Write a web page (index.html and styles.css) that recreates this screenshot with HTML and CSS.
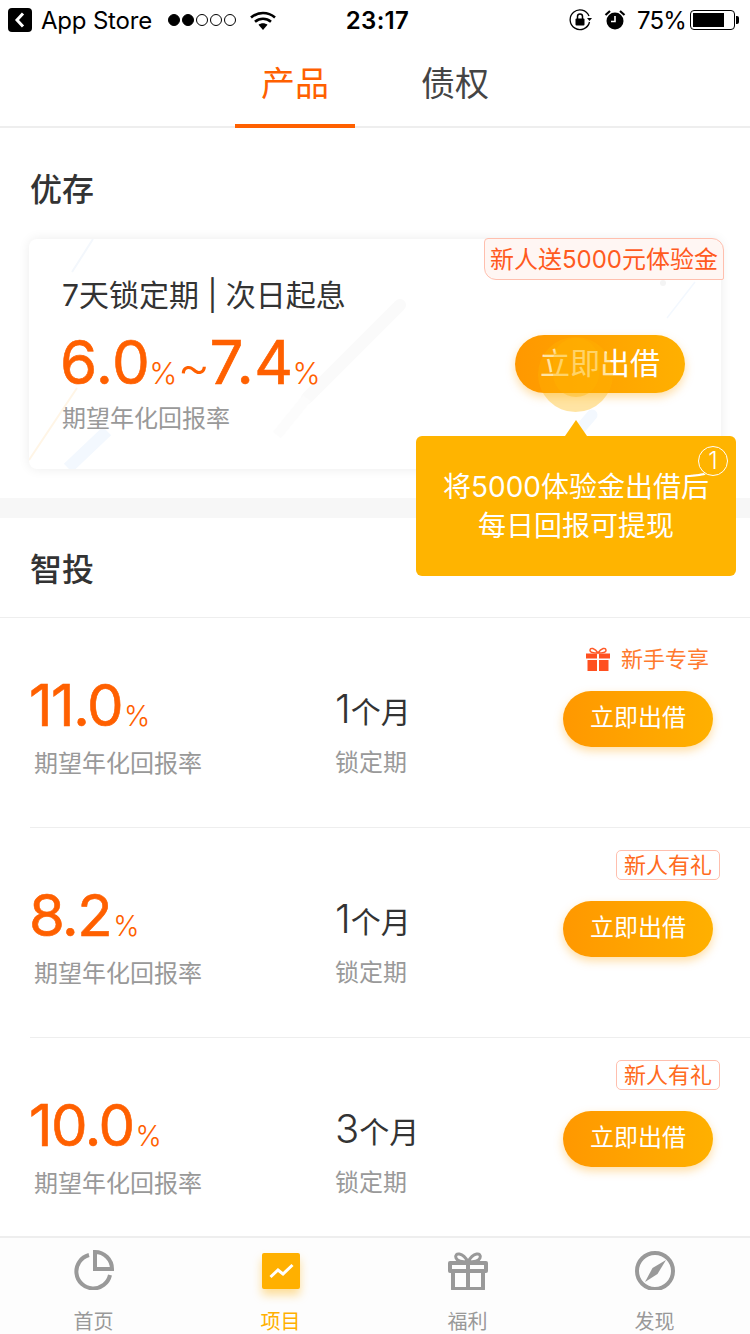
FILE: index.html
```html
<!DOCTYPE html>
<html lang="zh-CN">
<head>
    <meta charset="UTF-8">
    <meta name="viewport" content="width=device-width, initial-scale=1.0">
    <title>项目</title>
    <link rel="stylesheet" href="styles.css">
</head>
<body>
<div class="page">
    <div class="status-bar">
        <div class="status-left">
            <svg class="back-icon" width="24" height="24" viewBox="0 0 24 24"><rect width="24" height="24" rx="4" fill="#000"/><path d="M15 5.500L9 12l6 6.500" fill="none" stroke="#fff" stroke-width="3"/></svg>
            <span class="status-app">App Store</span>
            <span class="signal"><i class="on"></i><i class="on"></i><i></i><i></i><i></i></span>
            <svg class="wifi-icon" width="26" height="19" viewBox="0 0 26 19"><path d="M1 6.500C8 .5 18 .5 25 6.500" fill="none" stroke="#000" stroke-width="2.600"/><path d="M5 10.700c4.800-4 11.200-4 16 0" fill="none" stroke="#000" stroke-width="2.600"/><path d="M8.500 13.800c2.700-2 6.300-2 9 0L13 19z" fill="#000"/></svg>
        </div>
        <div class="status-time">23:17</div>
        <div class="status-right">
            <svg width="24" height="22" viewBox="0 0 24 22"><path d="M20.500 13A9.800 9.800 0 1 1 20 7" fill="none" stroke="#000" stroke-width="1.300"/><path d="M18 9h5l-2.500 3z" fill="#000"/><rect x="6.500" y="9.500" width="9" height="7" rx="1" fill="#000"/><path d="M8.500 10V7.500a2.500 2.500 0 0 1 5 0V10" fill="none" stroke="#000" stroke-width="1.500"/></svg>
            <svg class="alarm-icon" width="22" height="22" viewBox="0 0 22 22"><circle cx="11" cy="12" r="8.500" fill="#000"/><path d="M11 7v5.500H7" fill="none" stroke="#fff" stroke-width="1.600"/><path d="M1.500 6L6 2M20.500 6L16 2" stroke="#000" stroke-width="2.200"/></svg>
            <span class="status-battery-text">75%</span>
            <span class="battery"><i></i></span>
        </div>
    </div>

    <div class="tabs">
        <a class="tab active">产品</a>
        <a class="tab">债权</a>
    </div>

    <main class="content">
        <section class="saving">
            <h2 class="section-title">优存</h2>
            <div class="card">
                <svg class="card-bg" width="692" height="230" viewBox="0 0 692 230" fill="none">
                    <path d="M64 0L43 33" stroke="#f3f7fc" stroke-width="2"/>
                    <path d="M0 221L48 149" stroke="#fff5e6" stroke-width="2"/>
                    <path d="M39 229L78 192" stroke="#f3f8fe" stroke-width="12"/>
                    <path d="M371 66L278 159" stroke="#fafafa" stroke-width="12" stroke-linecap="round"/>
                    <path d="M278 159L248 196" stroke="#fcfcfc" stroke-width="10"/>
                    <path d="M666 43L638 79" stroke="#f3f8fe" stroke-width="1.500"/>
                    <circle cx="634" cy="44" r="3" fill="#f4f4f4"/>
                    <path d="M563 176L551 190" stroke="#f3f8fe" stroke-width="11" stroke-linecap="round"/>
                </svg>
                <span class="card-badge">新人送5000元体验金</span>
                <div class="card-info">
                    <p class="card-terms">7天锁定期 | 次日起息</p>
                    <p class="card-rate">6.0<small>%</small><span class="tilde">~</span>7.4<small>%</small></p>
                    <p class="label">期望年化回报率</p>
                </div>
                <div class="card-action">
                    <a class="btn btn-large">立即出借<i class="halo halo-outer"></i><i class="halo halo-inner"></i></a>
                </div>
                <div class="tooltip">
                    <span class="tooltip-step">1</span>
                    将5000体验金出借后<br>每日回报可提现
                </div>
            </div>
        </section>

        <div class="band"></div>

        <section class="invest">
            <h2 class="section-title invest-title">智投</h2>

            <div class="row">
                <div class="row-rate">
                    <p class="rate">11.0<small>%</small></p>
                    <p class="label">期望年化回报率</p>
                </div>
                <div class="row-term">
                    <p class="term"><b>1</b>个月</p>
                    <p class="label">锁定期</p>
                </div>
                <div class="row-action">
                    <span class="gift-tag">
                        <svg width="24" height="24" viewBox="0 0 24 24"><path d="M12 6C9 1 4 0 4 3.500 4 6 8 6 12 6c4 0 8 0 8-2.500C20 0 15 1 12 6z" fill="none" stroke="#ff5a28" stroke-width="1.500"/><path d="M0 6.500h11v5H0zM13 6.500h11v5H13zM1.500 13H11v11H1.500zM13 13h9.500v11H13z" fill="#ff5020"/></svg>
                        新手专享
                    </span>
                    <a class="btn">立即出借</a>
                </div>
            </div>

            <div class="row">
                <div class="row-rate">
                    <p class="rate">8.2<small>%</small></p>
                    <p class="label">期望年化回报率</p>
                </div>
                <div class="row-term">
                    <p class="term"><b>1</b>个月</p>
                    <p class="label">锁定期</p>
                </div>
                <div class="row-action">
                    <span class="tag">新人有礼</span>
                    <a class="btn">立即出借</a>
                </div>
            </div>

            <div class="row">
                <div class="row-rate">
                    <p class="rate">10.0<small>%</small></p>
                    <p class="label">期望年化回报率</p>
                </div>
                <div class="row-term">
                    <p class="term"><b>3</b>个月</p>
                    <p class="label">锁定期</p>
                </div>
                <div class="row-action">
                    <span class="tag">新人有礼</span>
                    <a class="btn">立即出借</a>
                </div>
            </div>
        </section>
    </main>

    <nav class="tabbar">
        <a class="tabbar-item">
            <svg width="40" height="40" viewBox="0 0 40 40" fill="none" stroke="#999" stroke-width="4"><path d="M15 5A17 17 0 1 0 36 25"/><path d="M21 2A17 17 0 0 1 38 19H21z"/></svg>
            首页
        </a>
        <a class="tabbar-item active">
            <span class="tabbar-square"><svg width="38" height="36" viewBox="0 0 38 36" fill="none" stroke="#fff" stroke-width="3"><path d="M8.500 24L16 17l5 4 9.500-9"/></svg></span>
            项目
        </a>
        <a class="tabbar-item">
            <svg width="40" height="40" viewBox="0 -1 40 40" fill="none" stroke="#999" stroke-width="4" stroke-linejoin="round"><path d="M20 11C15 1 6 1 8 7c1 3 6 4 12 4 6 0 11-1 12-4 2-6-7-6-12 4z" stroke-width="3"/><path d="M2 12h36v8H2zM5 20h30v18H5zM20 12v26"/></svg>
            福利
        </a>
        <a class="tabbar-item">
            <svg width="40" height="40" viewBox="0 -1 40 40"><circle cx="20" cy="20" r="18" fill="none" stroke="#999" stroke-width="4"/><path d="M31 9L22.500 23 10 31 17.500 17z" fill="#999"/></svg>
            发现
        </a>
    </nav>
</div>
</body>
</html>
```

FILE: styles.css
```css
* {
    box-sizing: border-box;
    margin: 0;
    padding: 0;
}

body {
    font-family: Inter, "Noto Sans CJK SC", sans-serif;
    font-weight: 300;
    background-color: white;
    color: #333;
}

.page {
    width: 750px;
    height: 1334px;
    display: flex;
    flex-direction: column;
    overflow: hidden;
}

/* status bar */
.status-bar {
    height: 40px;
    flex: none;
    display: grid;
    grid-template-columns: 1fr auto 1fr;
    align-items: center;
    padding: 0 15px 0 8px;
    font-size: 24px;
    font-weight: 400;
    color: #000;
}

.status-left, .status-right {
    display: flex;
    align-items: center;
}

.status-right {
    justify-content: flex-end;
}

.status-app {
    margin-left: 9px;
    letter-spacing: -0.2px;
}

.signal {
    display: flex;
    gap: 2px;
    margin-left: 16px;
}

.signal i {
    width: 12px;
    height: 12px;
    border: 1px solid #000;
    border-radius: 50%;
}

.signal i.on {
    background-color: #000;
}

.wifi-icon {
    margin-left: 14px;
}

.status-time {
    font-weight: 600;
    letter-spacing: 0.3px;
    margin-left: 12px;
}

.alarm-icon {
    margin-left: 11px;
}

.status-battery-text {
    margin-left: 11px;
    letter-spacing: -0.8px;
}

.battery {
    position: relative;
    width: 45px;
    height: 20px;
    margin-left: 4px;
    padding: 2px;
    border: 1px solid #000;
    border-radius: 4px;
}

.battery i {
    display: block;
    width: 31px;
    height: 100%;
    background-color: #000;
}

.battery::after {
    content: "";
    position: absolute;
    right: -5px;
    top: 5px;
    width: 3px;
    height: 8px;
    background-color: #000;
    border-radius: 0 2px 2px 0;
}

/* top tabs */
.tabs {
    height: 88px;
    flex: none;
    display: flex;
    justify-content: center;
    gap: 40px;
    border-bottom: 2px solid #eee;
}

.tab {
    width: 120px;
    height: 88px;
    line-height: 88px;
    text-align: center;
    font-size: 34px;
    font-weight: 400;
    color: #444;
}

.tab.active {
    color: #ff6000;
    border-bottom: 4px solid #ff6000;
}

.content {
    flex: 1;
    min-height: 0;
}

.section-title {
    font-size: 32px;
    font-weight: 500;
    line-height: 40px;
    color: #333;
}

/* 优存 */
.saving {
    padding: 42px 29px 29px;
}

.saving .section-title {
    margin: 0 0 29px 1px;
}

.card {
    position: relative;
    height: 230px;
    display: flex;
    justify-content: space-between;
    padding: 36px 36px 0 33px;
    background-color: white;
    border-radius: 8px;
    box-shadow: 0 0 12px rgba(0, 0, 0, 0.08);
}

.card-bg {
    position: absolute;
    left: 0;
    top: 0;
    border-radius: 8px;
}

.card-info, .card-action {
    position: relative;
}

.card-badge {
    position: absolute;
    right: -3px;
    top: -1px;
    width: 240px;
    height: 42px;
    line-height: 41px;
    text-align: center;
    font-size: 24px;
    font-weight: 400;
    white-space: nowrap;
    color: #ff5a1e;
    background-color: #fff6f3;
    border: 1px solid #ffbfae;
    border-radius: 4px 12px 2px 12px;
}

.card-terms {
    font-size: 30px;
    font-weight: 400;
    line-height: 40px;
    color: #333;
}

.card-rate {
    font-size: 60px;
    font-weight: 400;
    -webkit-text-stroke: 0.6px #ff6000;
    letter-spacing: 0.5px;
    line-height: 70px;
    margin: 12px 0 0 -2px;
    color: #ff6000;
    white-space: nowrap;
}

.card-rate small, .rate small {
    font-size: 30px;
    font-weight: 300;
    -webkit-text-stroke: 0;
    letter-spacing: 0;
    margin-left: -1px;
}

.tilde {
    font-size: 50px;
    font-weight: 300;
    -webkit-text-stroke: 0;
    margin-right: -1px;
}

.label {
    font-size: 24px;
    font-weight: 400;
    line-height: 32px;
    color: #999;
}

.card-info .label {
    margin-top: -5px;
}

.card-action {
    padding-top: 60px;
}

.btn {
    position: relative;
    display: block;
    width: 150px;
    height: 56px;
    line-height: 54px;
    text-align: center;
    font-size: 24px;
    font-weight: 400;
    color: white;
    border-radius: 29px;
    background: linear-gradient(to right, #ff9800, #ffb000);
    box-shadow: 0 4px 10px rgba(255, 160, 0, 0.35);
}

.btn-large {
    width: 170px;
    height: 58px;
    line-height: 56px;
    font-size: 30px;
}

.halo {
    position: absolute;
    border-radius: 50%;
    background-color: rgba(255, 180, 0, 0.36);
}

.halo-outer {
    left: 23px;
    top: 2px;
    width: 75px;
    height: 75px;
}

.halo-inner {
    left: 38px;
    top: 3px;
    width: 46px;
    height: 59px;
    border-radius: 23px;
}

.tooltip {
    position: absolute;
    left: 387px;
    top: 197px;
    width: 320px;
    height: 140px;
    padding-top: 32px;
    text-align: center;
    font-size: 28px;
    font-weight: 400;
    line-height: 39px;
    color: white;
    background-color: #ffb400;
    border-radius: 6px;
    z-index: 2;
}

.tooltip::before {
    content: "";
    position: absolute;
    left: 149px;
    top: -16px;
    border-left: 11px solid transparent;
    border-right: 11px solid transparent;
    border-bottom: 16px solid #ffb400;
}

.tooltip-step {
    position: absolute;
    right: 8px;
    top: 10px;
    width: 30px;
    height: 30px;
    line-height: 27px;
    font-size: 24px;
    font-weight: 300;
    border: 1.500px solid white;
    border-radius: 50%;
}

.band {
    height: 20px;
    background-color: #f7f7f7;
}

/* 智投 */
.invest-title {
    height: 100px;
    padding: 32px 0 0 30px;
    border-bottom: 1px solid #eee;
}

.row {
    height: 210px;
    margin-left: 30px;
    display: flex;
    border-bottom: 1px solid #eee;
}

.row:last-child {
    border-bottom: none;
}

.row-rate {
    width: 305px;
    padding-top: 55px;
}

.rate {
    font-size: 58px;
    font-weight: 400;
    -webkit-text-stroke: 0.6px #ff6000;
    line-height: 64px;
    margin-left: -1px;
    color: #ff6000;
    letter-spacing: -1.5px;
}

.rate small {
    font-size: 28px;
    margin-left: 2px;
}

.row-rate .label {
    margin: 0 0 0 4px;
}

.row-term {
    width: 228px;
    padding-top: 66px;
}

.term {
    font-size: 30px;
    font-weight: 400;
    line-height: 50px;
    color: #333;
}

.term b {
    font-size: 40px;
    font-weight: 300;
}

.row-term .label {
    margin-top: 10px;
}

.row-action {
    width: 150px;
    padding-top: 73px;
    position: relative;
}

.gift-tag {
    position: absolute;
    right: 4px;
    top: 27px;
    display: flex;
    align-items: center;
    gap: 11px;
    white-space: nowrap;
    font-size: 22px;
    font-weight: 400;
    line-height: 28px;
    color: #ff7a2e;
}

.tag {
    position: absolute;
    left: 53px;
    top: 22px;
    width: 104px;
    height: 30px;
    line-height: 28px;
    text-align: center;
    font-size: 22px;
    font-weight: 400;
    white-space: nowrap;
    color: #ff6a20;
    border: 1px solid #ffbfae;
    border-radius: 5px;
}

/* bottom tabbar */
.tabbar {
    height: 98px;
    flex: none;
    display: flex;
    padding-right: 2px;
    background-color: #fdfdfd;
    border-top: 2px solid #eee;
}

.tabbar-item {
    flex: 1;
    display: flex;
    flex-direction: column;
    align-items: center;
    padding-top: 12px;
    gap: 20px;
    font-size: 20px;
    font-weight: 400;
    line-height: 24px;
    color: #999;
}

.tabbar-item svg, .tabbar-square {
    flex: none;
}

.tabbar-item.active {
    color: #ffb000;
}

.tabbar-square {
    width: 38px;
    height: 36px;
    margin: 3px 0 1px;
    background-color: #ffb000;
    border-radius: 2px;
    box-shadow: 0 6px 10px rgba(255, 176, 0, 0.4);
}

.tabbar-square svg {
    display: block;
}
```
